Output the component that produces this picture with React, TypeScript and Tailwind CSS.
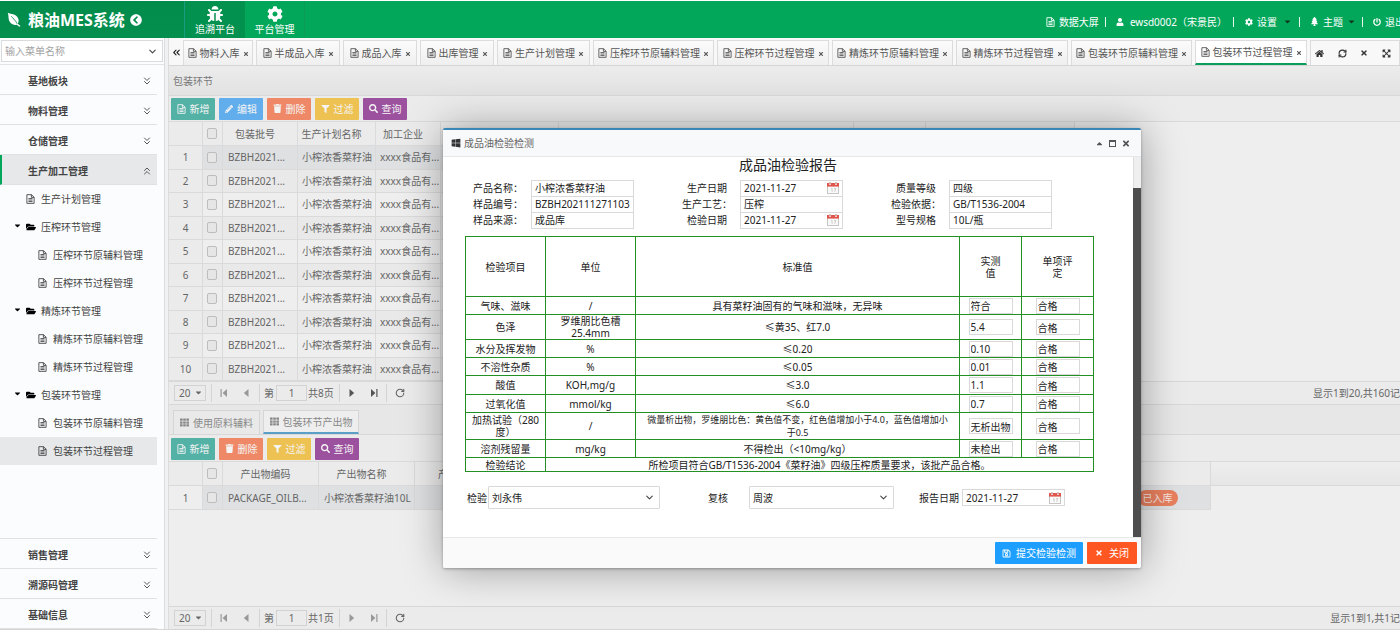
import type { ReactNode } from 'react';
import {
  FaBug, FaCaretDown, FaCaretUp, FaChevronCircleLeft, FaCog, FaExpandArrowsAlt, FaFilter, FaFolderOpen,
  FaHome, FaPencilAlt, FaPowerOff, FaRegSave, FaSearch, FaTh, FaTimes, FaTrash, FaTree, FaUser, FaWindows,
} from 'react-icons/fa';
import { ChevronDown, ChevronsDown, ChevronsLeft, ChevronsUp, RefreshCw, RotateCw } from 'lucide-react';
import clsx from 'clsx';

const openTabs = [
  { title: '物料入库', width: 'w-[70px]' },
  { title: '半成品入库', width: 'w-[84px]' },
  { title: '成品入库', width: 'w-[74px]' },
  { title: '出库管理', width: 'w-[74px]' },
  { title: '生产计划管理', width: 'w-[93px]' },
  { title: '压榨环节原辅料管理', width: 'w-[121px]' },
  { title: '压榨环节过程管理', width: 'w-[112px]' },
  { title: '精炼环节原辅料管理', width: 'w-[121px]' },
  { title: '精炼环节过程管理', width: 'w-[112px]' },
  { title: '包装环节原辅料管理', width: 'w-[121px]' },
  { title: '包装环节过程管理', width: 'w-[112px]', active: true },
];

const tree = [
  { title: '生产计划管理', type: 'page' },
  { title: '压榨环节管理', type: 'folder' },
  { title: '压榨环节原辅料管理', type: 'leaf' },
  { title: '压榨环节过程管理', type: 'leaf' },
  { title: '精炼环节管理', type: 'folder' },
  { title: '精炼环节原辅料管理', type: 'leaf' },
  { title: '精炼环节过程管理', type: 'leaf' },
  { title: '包装环节管理', type: 'folder' },
  { title: '包装环节原辅料管理', type: 'leaf' },
  { title: '包装环节过程管理', type: 'leaf', active: true },
];

const checks = [
  { item: '气味、滋味', unit: '/', standard: '具有菜籽油固有的气味和滋味，无异味', value: '符合', height: 'h-[18px]' },
  { item: '色泽', unit: <>罗维朋比色槽<br />25.4mm</>, standard: '≤黄35、红7.0', value: '5.4', height: 'h-[25px]' },
  { item: '水分及挥发物', unit: '%', standard: '≤0.20', value: '0.10', height: 'h-[18px]' },
  { item: '不溶性杂质', unit: '%', standard: '≤0.05', value: '0.01', height: 'h-[18px]' },
  { item: '酸值', unit: 'KOH,mg/g', standard: '≤3.0', value: '1.1', height: 'h-[19px]' },
  { item: '过氧化值', unit: 'mmol/kg', standard: '≤6.0', value: '0.7', height: 'h-[18px]' },
  {
    item: <>加热试验（280<br />度）</>,
    unit: '/',
    standard: <span className="text-[9px]">微量析出物，罗维朋比色：黄色值不变，红色值增加小于4.0，蓝色值增加小<br />于0.5</span>,
    value: '无析出物',
    height: 'h-[26px]',
  },
  { item: '溶剂残留量', unit: 'mg/kg', standard: '不得检出（<10mg/kg）', value: '未检出', height: 'h-[18px]' },
];

function LeafIcon() {
  return (
    <svg viewBox="0 0 16 16" className="h-[15px] w-[15px]">
      <path d="M0.8 0.8c2.6 1.6 6 0.8 9 3.2 3 2.5 3.2 6.2 1.7 8.4l2.9 2.5-1.3 0.8-2.7-2.2c-3.4 0.9-6.6-0.6-8-3.8C1.2 6.7 2 3.6 0.8 0.8z" fill="#fff" />
      <path d="M4.5 4.6c2.2 2 4.6 4.8 6.4 8" fill="none" stroke="#038e4d" strokeWidth="0.9" />
    </svg>
  );
}

function FileIcon({ className }: { className?: string }) {
  return (
    <svg viewBox="0 0 16 18" className={clsx('h-[10px] w-[9px] shrink-0', className)} fill="none" stroke="currentColor" strokeWidth="1.6">
      <path d="M1.5 1.2h8.3l4.7 4.6v11H1.5z" />
      <path d="M9.6 1.2v4.9h4.9M4.3 8.2h7.4M4.3 10.9h7.4M4.3 13.6h7.4" />
    </svg>
  );
}

function CalendarIcon() {
  return (
    <svg viewBox="0 0 12 12" className="h-3 w-3">
      <rect x="0.5" y="1.5" width="11" height="10" fill="#fafafa" stroke="#c9c4c4" />
      <rect x="0" y="1" width="12" height="3.6" fill="#e0564d" />
      <path d="M3 0v3M9 0v3" stroke="#fff" strokeWidth="1.6" />
      <path d="M3 0v2.4M9 0v2.4" stroke="#8d4a46" strokeWidth="0.7" />
      <path d="M4.2 7l0.9-0.6v3.4M7 6.6h1.8l-1.2 3.2" fill="none" stroke="#c2bdbd" strokeWidth="0.8" />
    </svg>
  );
}

function Divider() {
  return <span className="h-[10px] w-px bg-white/90" />;
}

function Header() {
  return (
    <header className="flex h-[37px] shrink-0 bg-[#02a75a] text-white">
      <div className="flex w-[184px] items-center bg-gradient-to-b from-[#028c4b] to-[#048f4e] pl-[7px]">
        <LeafIcon />
        <span className="ml-[6px] text-[16px] leading-[20px] font-bold">粮油MES系统</span>
        <button type="button" aria-label="收起" className="ml-[5px]"><FaChevronCircleLeft className="h-3 w-3" /></button>
      </div>
      <nav className="flex">
        <button type="button" className="flex w-[61px] flex-col items-center border-l border-[#1a9c80] bg-[#02914e] pt-[5px]">
          <FaBug className="h-4 w-4" />
          <span className="mt-px leading-[12px]">追溯平台</span>
        </button>
        <button type="button" className="flex w-[60px] flex-col items-center border-r border-[#0b9c58] pt-[5px]">
          <FaCog className="h-4 w-4" />
          <span className="mt-px leading-[12px]">平台管理</span>
        </button>
      </nav>
      <div className="ml-auto flex items-center gap-[6px] pt-1 pr-[5px] whitespace-nowrap">
        <a href="#" className="flex items-center gap-1"><FileIcon />数据大屏</a>
        <Divider />
        <a href="#" className="flex items-center gap-[6px] pl-1"><FaUser className="h-2 w-2" />ewsd0002（宋景民）</a>
        <Divider />
        <button type="button" className="flex items-center gap-1 pr-px pl-[5px]">
          <FaCog className="h-2 w-2" />设置<FaCaretDown className="ml-[2px] h-[9px] w-[9px] text-[#0d3520]" />
        </button>
        <Divider />
        <button type="button" className="flex items-center gap-1 pl-[4px]">
          <FaTree className="h-[9px] w-[9px]" />主题<FaCaretDown className="h-[9px] w-[9px] text-[#0d3520]" />
        </button>
        <Divider />
        <a href="#" className="flex items-center gap-1 pl-[4px]"><FaPowerOff className="h-2 w-2" />退出</a>
      </div>
    </header>
  );
}

function SideItem({ title, open }: { title: string; open?: boolean }) {
  const Icon = open ? ChevronsUp : ChevronsDown;
  return (
    <button
      type="button"
      className={clsx(
        'flex h-[30px] w-[157px] shrink-0 items-center justify-between border-b border-[#dfe2e5] pt-[3px] pr-[4px] text-left font-bold text-[#444]',
        open ? 'border-l-2 border-l-[#02a75a] bg-[#e6e8ea] pl-[26px]' : 'pl-[28px]',
      )}
    >
      {title}
      <Icon className="h-3 w-3" strokeWidth={1.8} />
    </button>
  );
}

function Sidebar() {
  return (
    <aside className="flex w-[164px] shrink-0 flex-col bg-[#fbfcfe]">
      <div className="border-b border-[#e2e4e8] px-[1px] pt-[2px] pb-[2px]">
        <div className="flex h-[22px] items-center border border-[#d9dbdd] bg-white">
          <input aria-label="输入菜单名称" placeholder="输入菜单名称" className="w-full min-w-0 px-[3px] outline-none placeholder:text-[#a3a3a3]" />
          <ChevronDown className="mr-1 h-[11px] w-[11px] shrink-0 text-[#444]" strokeWidth={2.4} />
        </div>
      </div>
      <SideItem title="基地板块" />
      <SideItem title="物料管理" />
      <SideItem title="仓储管理" />
      <SideItem title="生产加工管理" open />
      <ul className="w-[157px] flex-1 overflow-hidden border-b border-[#dfe2e5] text-[#444]">
        {tree.map((node) => (
          <li key={node.title}>
            <a
              href="#"
              className={clsx(
                'flex h-7 items-center',
                node.type === 'leaf' ? 'pl-[38px]' : node.type === 'page' ? 'pl-[26px]' : 'pl-[14px]',
                node.active && 'bg-[#e6e8ea]',
              )}
            >
              {node.type === 'folder' ? (
                <>
                  <FaCaretDown className="mb-[3px] h-[9px] w-[7px] text-black" />
                  <FaFolderOpen className="mr-[5px] ml-[5px] h-[10px] w-[10px] text-black" />
                </>
              ) : (
                <FileIcon className="mr-[6px]" />
              )}
              {node.title}
            </a>
          </li>
        ))}
      </ul>
      <SideItem title="销售管理" />
      <SideItem title="溯源码管理" />
      <SideItem title="基础信息" />
    </aside>
  );
}

function TabBar() {
  return (
    <div className="flex h-7 shrink-0 border-b border-[#d5d5d5] bg-[#f8f8f8] pt-[2px] text-[#555]">
      <button type="button" aria-label="向左" className="flex w-[14px] items-center justify-center text-[#222]">
        <ChevronsLeft className="h-[11px] w-[11px]" strokeWidth={2.4} />
      </button>
      <div className="flex gap-[3px]">
        {openTabs.map((tab) => (
          <div
            key={tab.title}
            className={clsx(
              'flex items-center justify-center gap-[3px] border-x border-t border-[#dcdcdc] whitespace-nowrap',
              tab.width,
              tab.active ? 'border-b-2 border-b-[#0a9d5c] bg-white' : 'bg-gradient-to-b from-[#fbfbfb] to-[#efefef]',
            )}
          >
            <FileIcon />
            <button type="button">{tab.title}</button>
            <button type="button" aria-label="关闭标签"><FaTimes className="mt-[2px] h-[6px] w-[6px]" /></button>
          </div>
        ))}
      </div>
      <div className="ml-[3px] flex w-[90px] shrink-0 items-center justify-between border-x border-t border-[#dcdcdc] pr-2 pl-1 text-[#333]">
        <button type="button" aria-label="首页"><FaHome className="h-[9px] w-[9px]" /></button>
        <button type="button" aria-label="刷新"><RefreshCw className="h-[9px] w-[9px]" strokeWidth={3} /></button>
        <button type="button" aria-label="关闭"><FaTimes className="h-2 w-2" /></button>
        <button type="button" aria-label="全屏"><FaExpandArrowsAlt className="h-[9px] w-[9px]" /></button>
      </div>
    </div>
  );
}

function ToolButton({ color, icon, children }: { color: string; icon: ReactNode; children: ReactNode }) {
  return (
    <button type="button" className={clsx('flex h-[22px] w-[44px] items-center justify-center gap-[4px] rounded-[1px] text-[#f4f4f4]', color)}>
      {icon}
      {children}
    </button>
  );
}

const addButton = <ToolButton color="bg-[#54b1a6]" icon={<FileIcon />}>新增</ToolButton>;
const removeButton = <ToolButton color="bg-[#ef8867]" icon={<FaTrash className="h-[9px] w-[9px]" />}>删除</ToolButton>;
const filterButton = <ToolButton color="bg-[#edc252]" icon={<FaFilter className="h-2 w-[9px]" />}>过滤</ToolButton>;
const searchButton = <ToolButton color="bg-[#9c519f]" icon={<FaSearch className="h-[9px] w-[9px]" />}>查询</ToolButton>;

function Check({ label }: { label: string }) {
  return <input type="checkbox" aria-label={label} className="block h-[11px] w-[10px] appearance-none rounded-[2px] border border-[#bdbdbd] bg-[#e6e6e6]" />;
}

function Pager({ pages, summary, last }: { pages: string; summary: string; last?: boolean }) {
  const next = last ? 'text-[#999]' : 'text-[#555]';
  return (
    <div className="flex h-[23px] shrink-0 items-center border-t border-[#d8d8d8] bg-[#ebebeb] pl-[5px] whitespace-nowrap text-[#666]">
      <div className="relative h-4 w-8">
        <select aria-label="每页条数" className="h-4 w-8 appearance-none border border-[#d2d2d2] pl-1 leading-[14px]">
          <option>20</option>
        </select>
        <FaCaretDown className="pointer-events-none absolute top-[3px] right-[3px] h-[9px] w-[9px]" />
      </div>
      <span className="ml-[5px] h-[18px] w-px bg-[#d4d4d4]" />
      <button type="button" aria-label="首页" className="ml-[8px]">
        <svg viewBox="0 0 8 8" className="h-2 w-2 fill-[#999]"><path d="M0.5 0h1.2v8H0.5zM7 0v8L2.6 4z" /></svg>
      </button>
      <button type="button" aria-label="上一页" className="ml-[14px]">
        <svg viewBox="0 0 8 8" className="h-2 w-2 fill-[#999]"><path d="M6.5 0v8L1.8 4z" /></svg>
      </button>
      <span className="ml-[9px] h-[18px] w-px bg-[#d4d4d4]" />
      <label className="ml-[4px] flex items-center gap-[2px]">
        第
        <input defaultValue="1" className="h-4 w-[31px] border border-[#d2d2d2] text-center" />
      </label>
      <span className="w-[32px] pl-px">{pages}</span>
      <span className="h-[18px] w-px bg-[#d4d4d4]" />
      <button type="button" aria-label="下一页" className={clsx('ml-[8px]', next)}>
        <svg viewBox="0 0 8 8" className="h-2 w-2 fill-current"><path d="M1.5 0v8L6.2 4z" /></svg>
      </button>
      <button type="button" aria-label="末页" className={clsx('ml-[14px]', next)}>
        <svg viewBox="0 0 8 8" className="h-2 w-2 fill-current"><path d="M6.3 0h1.2v8H6.3zM1 0v8l4.400-4z" /></svg>
      </button>
      <span className="ml-[8px] h-[18px] w-px bg-[#d4d4d4]" />
      <button type="button" aria-label="刷新" className="ml-[8px]"><RotateCw className="h-[10px] w-[10px]" strokeWidth={2.6} /></button>
      <span className="ml-auto">{summary}</span>
    </div>
  );
}

const rule = 'border-r border-b border-[#dadada] overflow-hidden whitespace-nowrap font-normal';
const cell = clsx(rule, 'py-0 px-[5px]');
const head = clsx(rule, 'py-0 pr-[13px] pl-[3px]');

function BatchGrid() {
  return (
    <div className="shrink-0 bg-[#eeeeee]">
      <table className="h-[259px] w-[906px] table-fixed border-separate border-spacing-0 text-[#666]">
        <colgroup>
          <col className="w-[34px]" /><col className="w-5" /><col className="w-[75px]" /><col className="w-[78px]" />
          <col className="w-[65px]" /><col className="w-[118px]" /><col className="w-[295px]" /><col className="w-[72px]" /><col className="w-[149px]" />
        </colgroup>
        <thead>
          <tr className="h-6 bg-[#ebebeb]">
            <th className={cell} />
            <th className={clsx(rule, 'px-1 py-0')}><Check label="全选" /></th>
            <th className={head}>包装批号</th>
            <th className={head}>生产计划名称</th>
            <th className={head}>加工企业</th>
            <th className={cell} /><th className={cell} /><th className={cell} /><th className={cell} />
          </tr>
        </thead>
        <tbody>
          {Array.from({ length: 10 }, (_, i) => (
            <tr key={i} className={clsx(i === 0 ? 'bg-[#dee0e2]' : i % 2 ? 'bg-[#e9e9e9]' : 'bg-[#eeeeee]')}>
              <td className={clsx(cell, 'bg-[#ebebeb] text-center')}>{i + 1}</td>
              <td className={clsx(rule, 'px-1 py-0')}><Check label={'选择第' + (i + 1) + '行'} /></td>
              <td className={cell}>BZBH2021...</td>
              <td className={clsx(rule, 'px-1 py-0')}>小榨浓香菜籽油</td>
              <td className={clsx(rule, 'px-1 py-0')}>xxxx食品有...</td>
              <td className={cell} /><td className={cell} /><td className={cell} /><td className={cell} />
            </tr>
          ))}
        </tbody>
      </table>
    </div>
  );
}

function OutputColumns() {
  return (
    <colgroup>
      <col className="w-[34px]" /><col className="w-5" /><col className="w-[96px]" /><col className="w-[96px]" />
      <col className="w-[120px]" /><col /><col className="w-[106px]" />
    </colgroup>
  );
}

function OutputGrid() {
  return (
    <div className="min-h-0 flex-1 bg-[#eeeeee]">
      <div className="border-b border-[#dadada] bg-gradient-to-b from-[#eeeeee] to-[#e6e6e6]">
        <table className="-mb-px w-[1042px] table-fixed border-separate border-spacing-0 text-[#666]">
          <OutputColumns />
          <thead>
            <tr className="h-6 bg-[#ebebeb]">
              <th className={cell} />
              <th className={clsx(rule, 'px-1 py-0')}><Check label="全选产出物" /></th>
              <th className={head}>产出物编码</th>
              <th className={head}>产出物名称</th>
              <th className={clsx(rule, 'p-0 pl-[23px] text-left')}>产出物数量</th>
              <th className={cell} />
              <th className={cell} />
            </tr>
          </thead>
        </table>
      </div>
      <table className="w-[1042px] table-fixed border-separate border-spacing-0 text-[#666]">
        <OutputColumns />
        <tbody>
          <tr className="h-6 bg-[#dee0e2]">
            <td className={clsx(cell, 'bg-[#eeeeee] text-center')}>1</td>
            <td className={clsx(rule, 'px-1 py-0')}><Check label="选择产出物" /></td>
            <td className={cell}>PACKAGE_OILB...</td>
            <td className={cell}>小榨浓香菜籽油10L</td>
            <td className={cell} />
            <td className={cell} />
            <td className={clsx(cell, 'text-center')}>
              <span className="inline-block h-4 rounded-full bg-[#e9805f] px-[5px] leading-4 text-[#f6e9e4]">已入库</span>
            </td>
          </tr>
        </tbody>
      </table>
    </div>
  );
}

const box = 'border border-[#d9d9d9] bg-white';

function Field({ label, value, date, labelWidth = 'w-[66px]' }: { label: string; value: string; date?: boolean; labelWidth?: string }) {
  return (
    <label className="flex items-center">
      <span className={clsx('text-center', labelWidth)}>{label}</span>
      <span className={clsx(box, 'flex h-[17px] w-[103px] items-center')}>
        <input defaultValue={value} className="w-full min-w-0 pl-[3px] outline-none" />
        {date && <span className="mr-[3px]"><CalendarIcon /></span>}
      </span>
    </label>
  );
}

function Picker({ label, value, width }: { label: string; value: string; width: string }) {
  return (
    <label className="flex items-center">
      <span>{label}</span>
      <span className={clsx('relative block', width)}>
        <select className={clsx(box, 'h-[23px] w-full appearance-none rounded-[1px] pl-[3px]')}>
          <option>{value}</option>
        </select>
        <ChevronDown className="pointer-events-none absolute top-[6px] right-[5px] h-[11px] w-[11px] text-[#444]" strokeWidth={2.4} />
      </span>
    </label>
  );
}

const line = 'border border-[#229022] p-0 font-normal';

function ReportDialog() {
  return (
    <section
      role="dialog"
      aria-label="成品油检验检测"
      className="absolute top-[62px] left-[274px] flex w-[698px] flex-col rounded-[2px] border-t-2 border-[#3a87b7] bg-white text-[#222] shadow-[1px_1px_40px_rgba(0,0,0,0.35),0_1px_3px_rgba(0,0,0,0.3)]"
    >
      <header className="flex h-[27px] items-center border-b border-[#e8e8e8] bg-[#f8f9fa] pr-[11px] pl-[8px] text-[#666]">
        <FaWindows className="h-[10px] w-[10px] text-[#333]" />
        <h2 className="ml-[3px]">成品油检验检测</h2>
        <div className="ml-auto flex items-center gap-[6px] text-[#555]">
          <button type="button" aria-label="收起"><FaCaretUp className="h-[9px] w-[7px]" /></button>
          <button type="button" aria-label="最大化" className="h-[7px] w-[7px] border border-t-2 border-[#555]" />
          <button type="button" aria-label="关闭"><FaTimes className="h-[9px] w-[8px]" /></button>
        </div>
      </header>

      <div className="flex">
        <div className="h-[380px] flex-1 pl-[22px]">
          <h1 className="ml-[226px] w-[194px] text-center text-[14px] leading-[16px]">成品油检验报告</h1>
          <div className="mt-[7px] grid w-[587px] grid-cols-[169px_169px_169px] justify-between [&>label]:h-4">
            <Field label="产品名称：" value="小榨浓香菜籽油" />
            <Field label="生产日期" value="2021-11-27" date />
            <Field label="质量等级" value="四级" />
            <Field label="样品编号：" value="BZBH202111271103" />
            <Field label="生产工艺：" value="压榨" />
            <Field label="检验依据：" value="GB/T1536-2004" />
            <Field label="样品来源：" value="成品库" />
            <Field label="检验日期" value="2021-11-27" date />
            <Field label="型号规格" value="10L/瓶" />
          </div>

          <table className="mt-2 w-[628px] table-fixed border-collapse text-center leading-[12px]">
            <colgroup>
              <col className="w-[80px]" /><col className="w-[90px]" /><col className="w-[324px]" /><col className="w-[62px]" /><col className="w-[72px]" />
            </colgroup>
            <thead>
              <tr className="h-[60px]">
                <th className={line}>检验项目</th>
                <th className={line}>单位</th>
                <th className={line}>标准值</th>
                <th className={line}>实测<br />值</th>
                <th className={line}>单项评<br />定</th>
              </tr>
            </thead>
            <tbody>
              {checks.map((row) => (
                <tr key={row.value} className={row.height}>
                  <td className={line}>{row.item}</td>
                  <td className={line}>{row.unit}</td>
                  <td className={line}>{row.standard}</td>
                  <td className={line}>
                    <input aria-label="实测值" defaultValue={row.value} className={clsx(box, 'mx-auto block h-4 w-[44px] px-px')} />
                  </td>
                  <td className={line}>
                    <input aria-label="单项评定" defaultValue="合格" className={clsx(box, 'mx-auto block h-4 w-[44px] px-px')} />
                  </td>
                </tr>
              ))}
              <tr className="h-[14px]">
                <td className={line}>检验结论</td>
                <td className={line} colSpan={4}>所检项目符合GB/T1536-2004《菜籽油》四级压榨质量要求，该批产品合格。</td>
              </tr>
            </tbody>
          </table>

          <div className="mt-[14px] flex items-center pl-[2px] [&>label]:gap-px">
            <Picker label="检验" value="刘永伟" width="w-[172px]" />
            <span className="ml-[48px] flex [&>label]:gap-[21px]">
              <Picker label="复核" value="周波" width="w-[145px]" />
            </span>
            <span className="ml-[22px]">
              <Field label="报告日期" value="2021-11-27" date labelWidth="w-[46px]" />
            </span>
          </div>
        </div>
        <div className="w-2 bg-[#4e4e4e]">
          <div className="h-[31px] border-l border-[#ddd] bg-[#efefef]" />
        </div>
      </div>

      <footer className="flex h-[31px] justify-end gap-1 rounded-b-[2px] border-t border-[#e8e8e8] bg-[#fafafa] pt-1 pr-1 text-white">
        <button type="button" className="flex h-[22px] w-[88px] items-center justify-center gap-[5px] rounded-[1px] bg-[#1e9fff]">
          <FaRegSave className="h-[9px] w-[9px]" />提交检验检测
        </button>
        <button type="button" className="flex h-[22px] w-[50px] items-center justify-center gap-[6px] rounded-[1px] bg-[#ff5722]">
          <FaTimes className="h-2 w-2" />关闭
        </button>
      </footer>
    </section>
  );
}

export default function App() {
  return (
    <div className="h-screen overflow-hidden bg-white font-['Noto_Sans','Noto_Sans_CJK_SC',sans-serif] text-[10px] leading-[14px]">
      <div className="flex h-full w-[calc(100%+10px)] flex-col pt-px pb-[6px]">
        <Header />
        <div className="flex min-h-0 flex-1 border-b border-[#d5d5d5]">
          <Sidebar />
          <div className="w-[5px] shrink-0 border-x border-[#dcdcdc] bg-[#f0f1f2]" />
          <div className="flex min-w-0 flex-1 flex-col">
            <TabBar />
            <main className="relative flex min-h-0 flex-1 flex-col bg-[#eeeeee]">
              <div className="flex h-[30px] shrink-0 items-center border-b border-[#d8d8d8] bg-gradient-to-b from-[#ececec] to-[#e2e2e2] pt-px pl-[4px] text-[#777]">包装环节</div>
              <div className="flex h-[26px] shrink-0 items-center gap-1 border-b border-[#dadada] bg-[#ebebeb] pl-[2px]">
                {addButton}
                <ToolButton color="bg-[#62aeec]" icon={<FaPencilAlt className="h-2 w-2" />}>编辑</ToolButton>
                {removeButton}
                {filterButton}
                {searchButton}
              </div>
              <BatchGrid />
              <Pager pages="共8页" summary="显示1到20,共160记录" />
              <div className="flex h-[31px] shrink-0 items-end gap-[3px] border-y border-[#d8d8d8] bg-[#e7e7e7] pl-[4px] text-[#888]">
                <button type="button" className="flex h-6 w-[87px] items-center justify-center gap-1 border border-b-0 border-[#d5d5d5] bg-[#e9e9e9]">
                  <FaTh className="h-[9px] w-[9px]" />使用原料辅料
                </button>
                <button type="button" className="flex h-6 w-[96px] items-center justify-center gap-1 border border-b-2 border-[#d5d5d5] border-b-[#5c9fc6] bg-[#eeeeee]">
                  <FaTh className="h-[9px] w-[9px]" />包装环节产出物
                </button>
              </div>
              <div className="flex h-[27px] shrink-0 items-center gap-1 border-b border-[#dadada] bg-[#ebebeb] pt-px pl-[2px]">
                {addButton}
                {removeButton}
                {filterButton}
                {searchButton}
              </div>
              <OutputGrid />
              <Pager pages="共1页" summary="显示1到1,共1记录" last />
              <ReportDialog />
            </main>
          </div>
        </div>
      </div>
    </div>
  );
}
